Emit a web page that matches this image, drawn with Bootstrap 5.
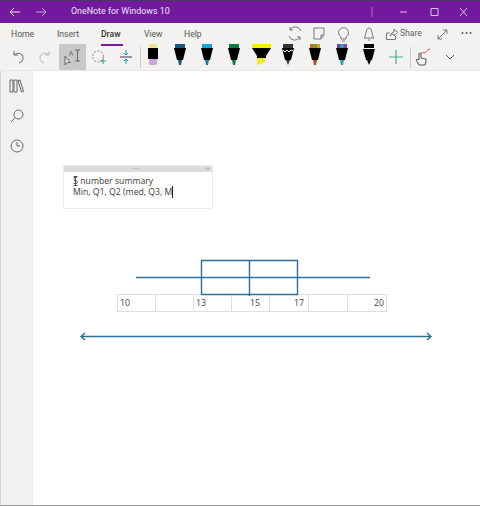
<!DOCTYPE html>
<html lang="en">
<head>
<meta charset="utf-8">
<title>OneNote for Windows 10</title>
<link href="https://cdn.jsdelivr.net/npm/bootstrap@5.3.0/dist/css/bootstrap.min.css" rel="stylesheet">
<style>
html,body{height:100%;margin:0;overflow:hidden}
body{font-family:"Open Sans","Noto Sans",sans-serif;color:#444;background:#fff;width:480px;height:506px}
.titlebar{height:23px;background:#72199f;border-top:1px solid #4a3a55;color:#efe3f6;font-family:Roboto,sans-serif;font-size:8.9px}
.tnav{width:71px;padding-left:9px;gap:14px}
.winctl svg{display:block}
.tabrow{height:21px;background:#f3f2f1;font-family:Roboto,sans-serif;font-size:8.6px;color:#555;padding-left:11px}
.tabitem{position:relative;line-height:20px}
.tabitem.sel{font-weight:500;color:#333}
.tabitem.sel::after{content:"";position:absolute;left:0;width:22px;bottom:-2px;height:2px;background:#7719aa}
.t1{width:46px}.t2{width:44px}.t3{width:43px}.t4{width:40px}
.rticons{position:absolute;left:0;top:0;width:480px;height:21px}
.sharetxt{position:absolute;left:400px;top:0;line-height:20px;color:#666}
.dots3{position:absolute;left:461px;top:8px}
.tools{height:27px;background:#f3f2f1;padding-left:4.5px;border-bottom:1px solid #e6e6e6}
.slot{width:27px;height:26px;flex:none}
.slot.on{background:#c9c8c7}
.slot.pen svg{margin-top:-4px}
.vbar{width:1px;height:21px;background:#c9c9c9;margin-right:-1px;flex:none}
.rail{width:33px;background:#f1f1f1;border-left:1px solid #d4d4d4;border-right:1px solid #e9e9e9;flex:none}
.railbtn{height:30px}
.paper{position:relative;background:#fff}
.notebox{position:absolute;left:30px;top:94px;width:150px;height:44px;background:#fff;border:1px solid #ececec;font-size:8.7px;color:#3b3b3b;line-height:11px}
.notehead{height:6px;background:#dcdcdc;color:#666;font-size:6px;line-height:5px;padding:0 3px}
.notetext{padding:4px 9px}
.caret{border-right:1px solid #222}
.ibeam{position:absolute;left:9px;top:10px}
.drawing{position:absolute;left:-33px;top:-71px;width:480px;height:506px}
.numstrip{position:absolute;left:84px;top:223px;border-collapse:collapse;font-size:8.800px;color:#444;table-layout:fixed;width:270px;margin:0}
.numstrip td{border:1px solid #dedede;height:17px;padding:0 2px;line-height:14px}
.numstrip td.pr9{padding-right:9px}.numstrip td.pr4{padding-right:4px}.numstrip td.pr2{padding-right:2px}
.w38{width:38px}.w39{width:39px}
.edgeline{height:1px;background:#9a9a9a;flex:none}
</style>
</head>
<body>
<div class="d-flex flex-column h-100">
  <div class="titlebar d-flex align-items-center">
    <div class="tnav d-flex align-items-center">
      <svg width="12" height="10" viewBox="0 0 12 10" fill="none" stroke="#efe3f6" stroke-width="1"><path d="M11 5H1M5 1 1 5l4 4"/></svg>
      <svg width="12" height="10" viewBox="0 0 12 10" fill="none" stroke="#c9a6de" stroke-width="1"><path d="M1 5h10M7 1l4 4-4 4"/></svg>
    </div>
    <span>OneNote for Windows 10</span>
    <div class="ms-auto d-flex align-items-center winctl">
      <svg width="110" height="12" viewBox="0 0 110 12" fill="none" stroke="#d9c3e8" stroke-width="1"><path d="M2 1v10" stroke="#a274bd"/><path d="M30 6h7"/><path d="M61 2.500h7v7h-7z"/><path d="M90 2l7 8M97 2l-7 8"/></svg>
    </div>
  </div>
  <div class="tabrow d-flex align-items-center position-relative">
    <span class="tabitem t1">Home</span>
    <span class="tabitem t2">Insert</span>
    <span class="tabitem t3 sel">Draw</span>
    <span class="tabitem t4">View</span>
    <span class="tabitem">Help</span>
    <div class="rticons">
      <svg width="480" height="21" viewBox="0 0 480 21" fill="none" stroke="#777" stroke-width="1" class="d-block">
        <path d="M301 8a6 6 0 0 0-11-1M289 13a6 6 0 0 0 11 1M290 4v3h3M300 17v-3h-3"/>
        <path d="M314 5h10v7l-3 4h-7zM324 12h-3v4"/>
        <path d="M341 14a5 5 0 1 1 5 0v2h-5zM342 18h3"/>
        <path d="M364 15c2-1 1.500-10 5-10s3 9 5 10zM368 17h2"/>
        <path d="M386.500 10v6.500h9V13M386.500 10h3M390 13c1-3 3-4 4-4V6l3.500 3.500L394 13v-2c-1 0-3 1-4 2z"/>
        <path d="M438 16l9-9M438 16v-4M438 16h4M447 7h-4M447 7v4"/>
      </svg>
      <span class="sharetxt">Share</span>
      <svg width="12" height="4" viewBox="0 0 12 4" fill="#555" class="dots3"><circle cx="1.500" cy="2" r="1"/><circle cx="5.500" cy="2" r="1"/><circle cx="9.500" cy="2" r="1"/></svg>
    </div>
  </div>
  <div class="tools d-flex align-items-center">
    <div class="slot d-flex align-items-center justify-content-center"><svg width="14" height="14" viewBox="0 0 14 14" fill="none" stroke="#666"><path d="M3 1v4h4M3 5c3-3 9-2 9 3 0 2-1 4-4 5"/></svg></div>
    <div class="slot d-flex align-items-center justify-content-center"><svg width="14" height="14" viewBox="0 0 14 14" fill="none" stroke="#bbb"><path d="M11 1v4H7M11 5C8 2 2 3 2 8c0 2 1 4 4 5"/></svg></div>
    <div class="slot on d-flex align-items-center justify-content-center"><svg width="20" height="18" viewBox="0 0 20 18" fill="none" stroke="#666"><path d="M3 8v9l2.500-2.500 3 0z" fill="#ddd"/><path d="M7 8l2-5 2 5M8 6h2" stroke="#888"/><path d="M13 2h5M15.500 2v11M13 13h5"/></svg></div>
    <div class="slot d-flex align-items-center justify-content-center"><svg width="16" height="16" viewBox="0 0 16 16" fill="none"><circle cx="7" cy="7.500" r="5.500" stroke="#888" stroke-dasharray="2 1.500"/><path d="M12 9v6M9 12h6" stroke="#3d9d7a"/></svg></div>
    <div class="slot d-flex align-items-center justify-content-center"><svg width="14" height="16" viewBox="0 0 14 16" fill="none"><path d="M1 8h12" stroke="#777" stroke-width="1.500"/><path d="M7 1v5M5 4l2 2 2-2M7 15v-5M5 12l2-2 2 2" stroke="#2a8cc7"/></svg></div>
    <div class="vbar"></div>
    <div class="slot pen d-flex align-items-center justify-content-center"><svg width="14" height="24" viewBox="0 0 14 24"><path d="M3 0h8v5H3z" fill="#efe38f"/><path d="M2 5h10v11H2z" fill="#000"/><path d="M3 16h8v5l-1 1H4l-1-1z" fill="#c9a6dc"/></svg></div>
    <div class="slot pen d-flex align-items-center justify-content-center"><svg width="14" height="24" viewBox="0 0 14 24"><path d="M2 0h10v5H2z" fill="#0f5c85"/><path d="M1 5h12l-3 12H4z" fill="#000"/><path d="M5 17h4l-1 5H6z" fill="#0f5c85"/></svg></div>
    <div class="slot pen d-flex align-items-center justify-content-center"><svg width="14" height="24" viewBox="0 0 14 24"><path d="M2 0h10v5H2z" fill="#19a3dd"/><path d="M1 5h12l-3 12H4z" fill="#000"/><path d="M5 17h4l-1 5H6z" fill="#177fa8"/></svg></div>
    <div class="slot pen d-flex align-items-center justify-content-center"><svg width="14" height="24" viewBox="0 0 14 24"><path d="M2 0h10v5H2z" fill="#0d7a3f"/><path d="M1 5h12l-3 12H4z" fill="#000"/><path d="M5 17h4l-1 5H6z" fill="#0d7a3f"/></svg></div>
    <div class="slot pen d-flex align-items-center justify-content-center"><svg width="21" height="24" viewBox="0 0 21 24"><path d="M1 0h19v5H1z" fill="#f4f200"/><path d="M1 5h19l-5 8v2H6v-2z" fill="#000"/><path d="M6 15h8v4l-8 3z" fill="#f0ea30"/></svg></div>
    <div class="slot pen d-flex align-items-center justify-content-center"><svg width="14" height="24" viewBox="0 0 14 24"><path d="M2 0h10v5H2z" fill="#333"/><path d="M1 5h12l-3 12H4z" fill="#000"/><path d="M2 7l2 2 2-2 2 2 2-2 2 1" stroke="#fff" fill="none"/><path d="M5 17h4l-2 5z" fill="#333"/></svg></div>
    <div class="slot pen d-flex align-items-center justify-content-center"><svg width="14" height="24" viewBox="0 0 14 24"><path d="M2 0h3v5H2z" fill="#c96a26"/><path d="M5 0h4v5H5z" fill="#7c9b35"/><path d="M9 0h3v5H9z" fill="#d99a2a"/><path d="M1 5h12l-3 12H4z" fill="#000"/><path d="M5 17h4l-1 5H6z" fill="#a9542d"/></svg></div>
    <div class="slot pen d-flex align-items-center justify-content-center"><svg width="14" height="24" viewBox="0 0 14 24"><path d="M2 0h3v5H2z" fill="#5b4fa5"/><path d="M5 0h4v5H5z" fill="#3f8fc0"/><path d="M9 0h3v5H9z" fill="#7a4fa0"/><path d="M1 5h12l-3 12H4z" fill="#000"/><path d="M5 17h4l-1 5H6z" fill="#2f9ba5"/></svg></div>
    <div class="slot pen d-flex align-items-center justify-content-center"><svg width="14" height="24" viewBox="0 0 14 24"><path d="M2 0h10v5H2z" fill="#000"/><path d="M1 6h12l-3 11H4z" fill="#000"/><path d="M5 17h4l-2 5z" fill="#000"/></svg></div>
    <div class="slot d-flex align-items-center justify-content-center"><svg width="14" height="14" viewBox="0 0 14 14"><path d="M7 0v14M0 7h14" stroke="#4aa987" stroke-width="1.200"/></svg></div>
    <div class="vbar"></div>
    <div class="slot d-flex align-items-center justify-content-center"><svg width="16" height="18" viewBox="0 0 16 18" fill="none"><path d="M4 17l-3-5 2-1 1 1V6a1 1 0 0 1 2 0v4l5 1v3l-1 3z" stroke="#555"/><path d="M6 6c1-3 4 0 5-2s2-2 4-3" stroke="#d44a55"/></svg></div>
    <div class="slot d-flex align-items-center justify-content-center"><svg width="10" height="6" viewBox="0 0 10 6" fill="none" stroke="#555"><path d="M1 1l4 4 4-4"/></svg></div>
  </div>
  <div class="d-flex flex-grow-1">
    <div class="rail">
      <div class="railbtn d-flex align-items-center justify-content-center"><svg width="15" height="14" viewBox="0 0 15 14" fill="none" stroke="#666"><path d="M1 1h3v12H1zM5 1h3v12H5zM9 1.500l2-.5 3.500 11.500-2 .5z"/></svg></div>
      <div class="railbtn d-flex align-items-center justify-content-center"><svg width="14" height="14" viewBox="0 0 14 14" fill="none" stroke="#666"><circle cx="8.500" cy="5.500" r="4.500"/><path d="M5 9l-4 4"/></svg></div>
      <div class="railbtn d-flex align-items-center justify-content-center"><svg width="14" height="14" viewBox="0 0 14 14" fill="none" stroke="#666"><circle cx="7" cy="7" r="6"/><path d="M7 3v4h3"/></svg></div>
    </div>
    <div class="paper flex-grow-1">
      <div class="notebox">
        <div class="notehead d-flex justify-content-between"><span class="mx-auto">····</span><span>‹›</span></div>
        <div class="notetext">5 number summary<br><span class="caret">Min, Q1, Q2 (med, Q3, M</span></div>
        <svg class="ibeam" width="5" height="10" viewBox="0 0 5 10" fill="none" stroke="#333" stroke-width=".8"><path d="M.5.500h4M2.500.500v9M.5 9.500h4"/></svg>
      </div>
      <table class="numstrip">
        <tr><td class="w38">10</td><td class="w38"></td><td class="w38">13</td><td class="w38 text-end pr9">15</td><td class="w39 text-end pr4">17</td><td class="w39"></td><td class="w39 text-end pr2">20</td></tr>
      </table>
      <svg class="drawing" viewBox="0 0 480 506" fill="none" stroke="#2a6f98" stroke-width="1.400">
        <path d="M136 277.500H370"/>
        <path d="M201.500 260.500h96v34h-96zM249.500 260.500V296"/>
        <path d="M81 336.500H431M85 333l-4 3.500 4 3.500M427 333l4 3.500-4 3.500"/>
      </svg>
    </div>
  </div>
  <div class="edgeline"></div>
</div>
<script src="https://cdn.jsdelivr.net/npm/bootstrap@5.3.0/dist/js/bootstrap.bundle.min.js"></script>
</body>
</html>
